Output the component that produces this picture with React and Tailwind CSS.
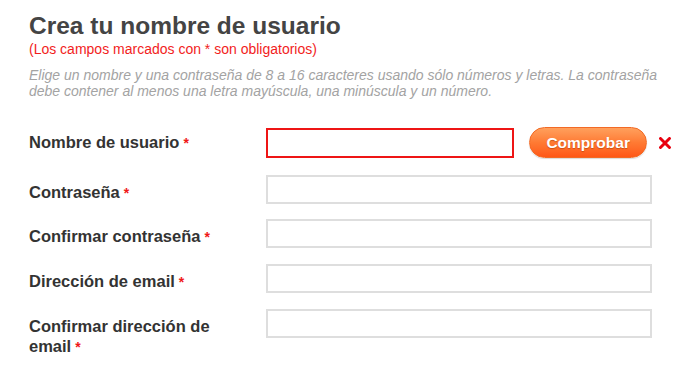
import React from "react";

function Req() {
  return <span className="ml-[4px] text-[14px] font-bold text-[#f01818]">*</span>;
}

function Row({ label, mt, children }) {
  return (
    <div className={`flex items-start ${mt}`}>
      <div className="w-[237px] shrink-0 pr-[22px] pt-[7px] text-[16.5px] leading-[20px] font-bold text-[#333]">
        {label}
      </div>
      {children}
    </div>
  );
}

export default function App() {
  return (
    <div
      className="min-h-[391px] w-[700px] bg-white px-[29px] pt-[12px]"
      style={{ fontFamily: '"Liberation Sans", Arial, sans-serif' }}
    >
      <h1 className="text-[24.5px] leading-[28px] font-bold text-[#444]">Crea tu nombre de usuario</h1>
      <p className="mt-[1px] text-[14px] leading-[16px] text-[#f21d1d]">
        (Los campos marcados con * son obligatorios)
      </p>
      <p className="mt-[10px] text-[14px] leading-[16px] italic text-[#a3a3a3]">
        Elige un nombre y una contraseña de 8 a 16 caracteres usando sólo números y letras. La contraseña
        <br />
        debe contener al menos una letra mayúscula, una minúscula y un número.
      </p>

      <div className="mt-[28px] flex items-center">
        <div className="w-[237px] shrink-0 pr-[22px] text-[16.5px] leading-[20px] font-bold text-[#333]">
          Nombre de usuario
          <Req />
        </div>
        <div className="mt-[1px] h-[30px] w-[249px] border-2 border-[#ee1515] bg-white"></div>
        <button className="ml-[15px] h-[31px] w-[118px] rounded-full border border-[#f26a25] bg-gradient-to-b from-[#ffa05c] via-[#ff7a33] to-[#ff5716] text-[15.5px] font-bold text-white [text-shadow:0_1px_1px_rgba(170,60,0,0.6)] shadow-[0_1px_1px_rgba(0,0,0,0.15)]">
          Comprobar
        </button>
        <svg className="ml-[12px]" width="12" height="12" viewBox="0 0 12 12">
          <path d="M1.5 1.5 L10.5 10.5 M10.5 1.5 L1.5 10.5" stroke="#e8000f" strokeWidth="3" strokeLinecap="round" />
        </svg>
      </div>

      <Row label={<>Contraseña<Req /></>} mt="mt-[17px]">
        <div className="h-[29px] w-[386px] border-2 border-[#dedede] bg-white"></div>
      </Row>
      <Row label={<>Confirmar contraseña<Req /></>} mt="mt-[15px]">
        <div className="h-[29px] w-[386px] border-2 border-[#dedede] bg-white"></div>
      </Row>
      <Row label={<>Dirección de email<Req /></>} mt="mt-[16px]">
        <div className="h-[29px] w-[386px] border-2 border-[#dedede] bg-white"></div>
      </Row>
      <Row
        label={
          <>
            <span className="block">Confirmar dirección de</span>
            <span className="block">
              email
              <Req />
            </span>
          </>
        }
        mt="mt-[16px]"
      >
        <div className="h-[29px] w-[386px] border-2 border-[#dedede] bg-white"></div>
      </Row>
    </div>
  );
}
